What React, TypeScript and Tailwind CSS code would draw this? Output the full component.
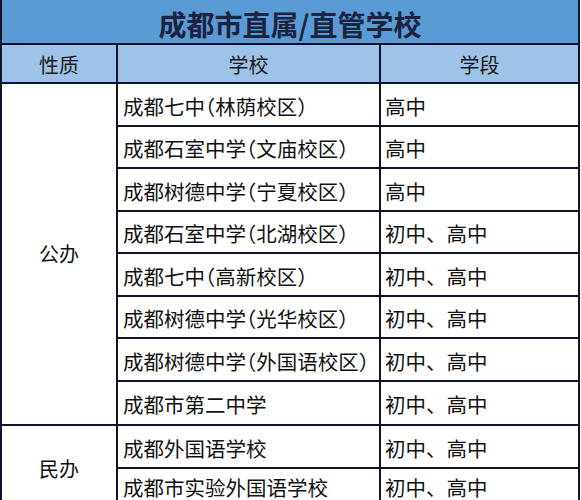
import React from "react";

const groups: { kind: string; rows: [string, string][]; lastTall?: boolean }[] = [
  {
    kind: "公办",
    rows: [
      ["成都七中（林荫校区）", "高中"],
      ["成都石室中学（文庙校区）", "高中"],
      ["成都树德中学（宁夏校区）", "高中"],
      ["成都石室中学（北湖校区）", "初中、高中"],
      ["成都七中（高新校区）", "初中、高中"],
      ["成都树德中学（光华校区）", "初中、高中"],
      ["成都树德中学（外国语校区）", "初中、高中"],
      ["成都市第二中学", "初中、高中"],
    ],
  },
  {
    kind: "民办",
    rows: [
      ["成都外国语学校", "初中、高中"],
      ["成都市实验外国语学校", "初中、高中"],
    ],
    lastTall: true,
  },
];

export default function App() {
  return (
    <div
      className="w-[581px] h-[500px] overflow-hidden bg-white"
      style={{ fontFamily: '"Noto Sans CJK SC", "Noto Sans", sans-serif' }}
    >
      <div className="w-[580px] border-x-2 border-[#10142a]">
        <div className="h-[45px] border-b-2 border-[#10142a] bg-[#5b9bd5] flex items-center justify-center pt-[5px]">
          <span className="text-[28px] font-bold text-[#1b2440] leading-none">
            成都市直属/直管学校
          </span>
        </div>
        <div className="h-[39px] border-b-2 border-[#10142a] bg-[#9fc3e8] flex text-[20px] text-[#1a1a1a] leading-none">
          <div className="w-[116px] border-r-2 border-[#10142a] flex items-center justify-center pt-[3px]">
            性质
          </div>
          <div className="w-[263px] border-r-2 border-[#10142a] flex items-center justify-center pt-[3px]">
            学校
          </div>
          <div className="flex-1 flex items-center justify-center pt-[3px]">学段</div>
        </div>
        {groups.map((g) => (
          <div key={g.kind} className="flex border-b-2 border-[#10142a]">
            <div className="w-[116px] border-r-2 border-[#10142a] flex items-center justify-center text-[20px] text-[#111] leading-none">
              {g.kind}
            </div>
            <div className="flex-1 flex flex-col">
              {g.rows.map(([school, stage], i) => {
                const last = i === g.rows.length - 1;
                const tall = last && g.lastTall;
                const h = tall ? "h-[44px]" : "h-[42.5px]";
                const align = tall ? "items-start pt-[8px]" : "items-center pt-[3px]";
                return (
                  <div
                    key={school}
                    className={`flex ${h} ${last ? "" : "border-b-2 border-[#10142a]"} text-[20.5px] text-[#111] leading-none`}
                  >
                    <div className={`w-[263px] border-r-2 border-[#10142a] flex ${align} pl-[5px] [font-feature-settings:'halt']`}>
                      {school}
                    </div>
                    <div className={`flex-1 flex ${align} pl-[4px]`}>{stage}</div>
                  </div>
                );
              })}
            </div>
          </div>
        ))}
      </div>
    </div>
  );
}
